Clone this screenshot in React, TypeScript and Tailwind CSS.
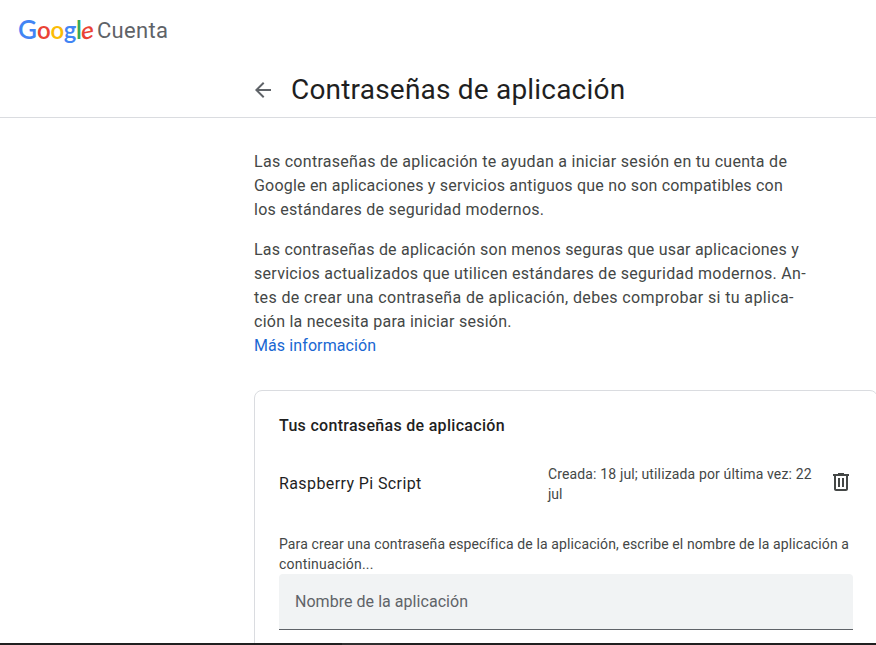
const bodyLine = "block whitespace-nowrap";

function GoogleLogo() {
  return (
    <div className="mb-[4px] flex h-[30px] w-[76px] shrink-0 items-baseline whitespace-nowrap font-['Lato','Liberation_Sans',sans-serif] text-[24px] leading-[30px] font-semibold">
      <span className="w-[19px] text-[26px] text-[#4285f4]">G</span>
      <span className="w-[13.4px] text-[#ea4335]">o</span>
      <span className="w-[13.4px] text-[#fbbc05]">o</span>
      <span className="w-[12.2px] text-[#4285f4]">g</span>
      <span className="w-[5.4px] text-[#34a853]">l</span>
      <span className="inline-block w-[12.6px] origin-[50%_60%] -skew-y-12 text-[#ea4335]">e</span>
    </div>
  );
}

function BackArrow() {
  return (
    <svg width="24" height="24" viewBox="0 0 24 24" fill="#5f6368">
      <path d="M20 11H7.83l5.59-5.59L12 4l-8 8 8 8 1.41-1.41L7.83 13H20v-2z" />
    </svg>
  );
}

function TrashIcon() {
  return (
    <svg width="24" height="24" viewBox="0 0 24 24" fill="#444746">
      <path d="M15 4V3H9v1H4v2h1v13c0 1.1.9 2 2 2h10c1.1 0 2-.9 2-2V6h1V4h-5zm2 15H7V6h10v13z" />
      <path d="M9 8h2v9H9zm4 0h2v9h-2z" />
    </svg>
  );
}

export default function App() {
  return (
    <div className="flex h-[645px] w-[876px] flex-col overflow-hidden bg-white font-['Roboto','Liberation_Sans',sans-serif] text-[#444746]">
      <header className="h-[118px] shrink-0 border-b border-[#dadce0]">
        <div className="flex h-[62px] items-center pl-[18px]">
          <GoogleLogo />
          <span className="ml-[3px] text-[22px] leading-[30px] tracking-[0.3px] text-[#5f6368]">Cuenta</span>
        </div>
        <div className="flex h-[56px] items-center pl-[251px]">
          <BackArrow />
          <h1 className="ml-[16px] whitespace-nowrap text-[28px] leading-9 tracking-[0.2px] text-[#1f1f1f]">
            Contraseñas de aplicación
          </h1>
        </div>
      </header>

      <main className="h-[525px] shrink-0 overflow-hidden pl-[254px] pt-[32px]">
        <p className="text-base leading-6">
          <span className={`${bodyLine} tracking-[0.286px]`}>Las contraseñas de aplicación te ayudan a iniciar sesión en tu cuenta de</span>
          <span className={`${bodyLine} tracking-[0.2px]`}>Google en aplicaciones y servicios antiguos que no son compatibles con</span>
          <span className={`${bodyLine} tracking-[0.25px]`}>los estándares de seguridad modernos.</span>
        </p>
        <p className="mt-4 text-base leading-6">
          <span className={`${bodyLine} tracking-[0.215px]`}>Las contraseñas de aplicación son menos seguras que usar aplicaciones y</span>
          <span className={`${bodyLine} tracking-[0.28px]`}>servicios actualizados que utilicen estándares de seguridad modernos. An-</span>
          <span className={`${bodyLine} tracking-[0.37px]`}>tes de crear una contraseña de aplicación, debes comprobar si tu aplica-</span>
          <span className={`${bodyLine} tracking-[0.25px]`}>ción la necesita para iniciar sesión.</span>
          <a className={`${bodyLine} tracking-[0.1px] text-[#1967d2]`}>Más información</a>
        </p>

        <section className="mt-[32px] h-[400px] w-[624px] rounded-lg border border-[#dadce0] pl-6 pt-[23px]">
          <h2 className="whitespace-nowrap text-base leading-6 font-medium tracking-[0.3px] text-[#1f1f1f]">
            Tus contraseñas de aplicación
          </h2>
          <div className="mt-[26px] flex h-[42px]">
            <span className="mt-[8px] w-[269px] whitespace-nowrap text-base leading-6 tracking-[0.4px] text-[#1f1f1f]">
              Raspberry Pi Script
            </span>
            <span className="w-[281px] text-sm leading-5">
              <span className={`${bodyLine} tracking-[0.14px]`}>Creada: 18 jul; utilizada por última vez: 22</span>
              <span className={bodyLine}>jul</span>
            </span>
            <span className="mt-[6px]">
              <TrashIcon />
            </span>
          </div>
          <p className="mt-[28px] text-sm leading-5">
            <span className={`${bodyLine} tracking-[0.11px]`}>Para crear una contraseña específica de la aplicación, escribe el nombre de la aplicación a</span>
            <span className={`${bodyLine} tracking-[0.2px]`}>continuación...</span>
          </p>
          <div className="flex h-[56px] w-[574px] items-center rounded-t border-b border-[#5f6368] bg-[#f1f3f4] pl-4 text-base tracking-[0.04px] text-[#5f6368]">
            Nombre de la aplicación
          </div>
        </section>
      </main>

      <footer className="h-[2px] shrink-0 bg-[#202020] pl-[342px]">
        <div className="h-[2px] w-[48px] bg-[#303030]" />
      </footer>
    </div>
  );
}
